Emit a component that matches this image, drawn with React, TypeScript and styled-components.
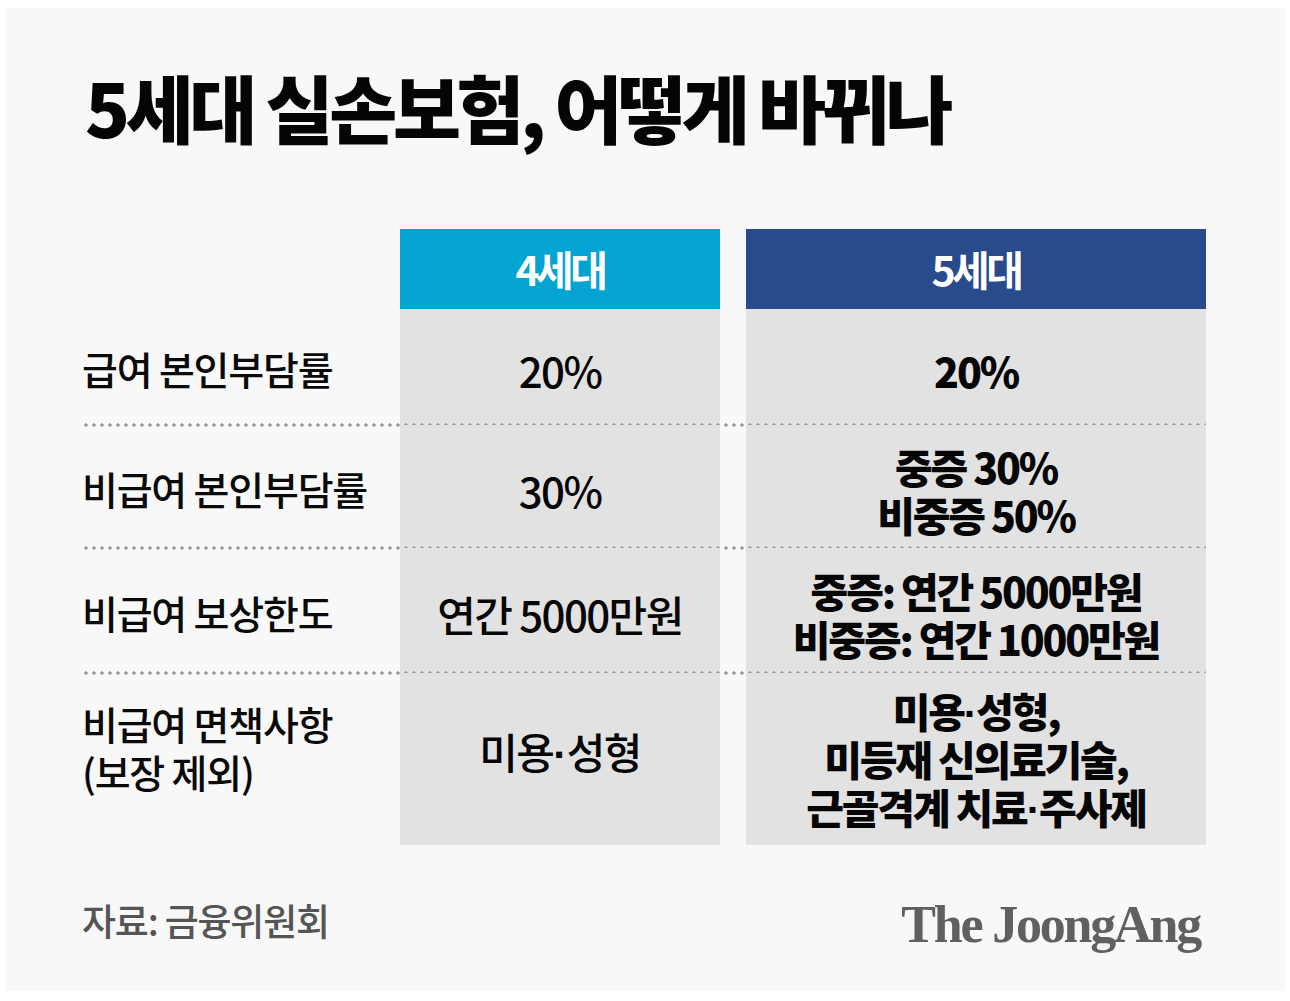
import React from "react";
import styled, { createGlobalStyle } from "styled-components";

const Global = createGlobalStyle`
  html, body { margin: 0; padding: 0; background: #ffffff; }
  body { font-family: "Noto Sans CJK KR", "Noto Sans", sans-serif; color: #111; }
`;

const KR = `"Noto Sans CJK KR", "Noto Sans", sans-serif`;

const Panel = styled.div`
  margin: 8px 5px 10px 5px;
  height: 983px;
  box-sizing: border-box;
  background: #f8f8f8;
  padding: 0 79px 0 77px;
  display: flex;
  flex-direction: column;
`;

const Title = styled.h1`
  margin: 53px 0 0 3px;
  font-family: ${KR};
  font-weight: 900;
  font-size: 74px;
  line-height: 89px;
  letter-spacing: -4.4px;
  color: #050505;
  white-space: nowrap;
`;

const Table = styled.div`
  margin-top: 79px;
  display: flex;
  flex-direction: column;
`;

const Row = styled.div<{ $h: number; $line?: boolean }>`
  position: relative;
  display: grid;
  grid-template-columns: 318px 320px 26px 460px;
  height: ${(p) => p.$h}px;
  &::after {
    content: "";
    display: ${(p) => (p.$line ? "block" : "none")};
    position: absolute;
    left: 0;
    right: 0;
    bottom: -2px;
    height: 4px;
    background-image: radial-gradient(circle, #979797 1.4px, transparent 1.9px);
    background-size: 8px 4px;
    background-repeat: repeat-x;
  }
`;

const Head = styled.div<{ $bg: string }>`
  background: ${(p) => p.$bg};
  display: flex;
  align-items: center;
  justify-content: center;
  font-family: ${KR};
  font-weight: 700;
  font-size: 41px;
  letter-spacing: -3.5px;
  color: #ffffff;
  padding-bottom: 2px;
`;

const Spacer = styled.div``;

const Label = styled.div<{ $up?: number }>`
  display: flex;
  flex-direction: column;
  justify-content: center;
  font-family: ${KR};
  font-weight: 500;
  font-size: 39px;
  line-height: 47px;
  letter-spacing: -1.2px;
  color: #0a0a0a;
  padding-top: 4px;
  padding-bottom: ${(p) => p.$up ?? 0}px;
  white-space: nowrap;
`;

const Cell = styled.div<{ $bold?: boolean; $up?: number }>`
  background: #e2e2e2;
  display: flex;
  flex-direction: column;
  align-items: center;
  justify-content: center;
  text-align: center;
  font-family: ${KR};
  font-weight: ${(p) => (p.$bold ? 900 : 500)};
  font-size: ${(p) => (p.$bold ? 41 : 42)}px;
  line-height: 48px;
  letter-spacing: ${(p) => (p.$bold ? "-2.2px" : "-1.6px")};
  color: #060606;
  padding-top: 6px;
  padding-bottom: ${(p) => p.$up ?? 0}px;
  white-space: nowrap;
`;

const Line = styled.span`
  display: block;
  height: 48px;
`;

const Dot = styled.span`
  font-family: "Liberation Sans", "DejaVu Sans", sans-serif;
  font-weight: 700;
  margin: 0 1px 0 0;
`;

const Footer = styled.div`
  margin-top: 40px;
  display: flex;
  justify-content: space-between;
  align-items: center;
`;

const Source = styled.div`
  font-family: ${KR};
  font-weight: 500;
  font-size: 37px;
  letter-spacing: -1.2px;
  color: #555555;
`;

const Logo = styled.div`
  font-family: "Liberation Serif", "DejaVu Serif", serif;
  font-weight: 700;
  font-size: 52px;
  letter-spacing: -2.2px;
  color: #606060;
  padding-top: 10px;
  margin-right: 6px;
`;

function Text({ t }: { t: string }) {
  const parts = t.split("·");
  return (
    <>
      {parts.map((p, i) => (
        <React.Fragment key={i}>
          {i > 0 && <Dot>·</Dot>}
          {p}
        </React.Fragment>
      ))}
    </>
  );
}

type RowData = {
  label: string[];
  v4: string[];
  v5: string[];
  h: number;
  line: boolean;
  up?: [number, number, number];
};

const rows: RowData[] = [
  { label: ["급여 본인부담률"], v4: ["20%"], v5: ["20%"], h: 116, line: true },
  { label: ["비급여 본인부담률"], v4: ["30%"], v5: ["중증 30%", "비중증 50%"], h: 123, line: true },
  {
    label: ["비급여 보상한도"],
    v4: ["연간 5000만원"],
    v5: ["중증: 연간 5000만원", "비중증: 연간 1000만원"],
    h: 125,
    line: true,
  },
  {
    label: ["비급여 면책사항", "(보장 제외)"],
    v4: ["미용·성형"],
    v5: ["미용·성형,", "미등재 신의료기술,", "근골격계 치료·주사제"],
    h: 172,
    line: false,
    up: [26, 22, 8],
  },
];

export default function App() {
  return (
    <>
      <Global />
      <Panel>
        <Title>5세대 실손보험, 어떻게 바뀌나</Title>
        <Table>
          <Row $h={80}>
            <Spacer />
            <Head $bg="#03a4d1">4세대</Head>
            <Spacer />
            <Head $bg="#2a4a8e">5세대</Head>
          </Row>
          {rows.map((r, i) => (
            <Row key={i} $h={r.h} $line={r.line}>
              <Label $up={r.up?.[0]}>
                {r.label.map((t) => (
                  <Line key={t}>{t}</Line>
                ))}
              </Label>
              <Cell $up={r.up?.[1]}>
                {r.v4.map((t) => (
                  <Line key={t}>
                    <Text t={t} />
                  </Line>
                ))}
              </Cell>
              <Spacer />
              <Cell $bold $up={r.up?.[2]}>
                {r.v5.map((t) => (
                  <Line key={t}>
                    <Text t={t} />
                  </Line>
                ))}
              </Cell>
            </Row>
          ))}
        </Table>
        <Footer>
          <Source>자료: 금융위원회</Source>
          <Logo>The JoongAng</Logo>
        </Footer>
      </Panel>
    </>
  );
}
